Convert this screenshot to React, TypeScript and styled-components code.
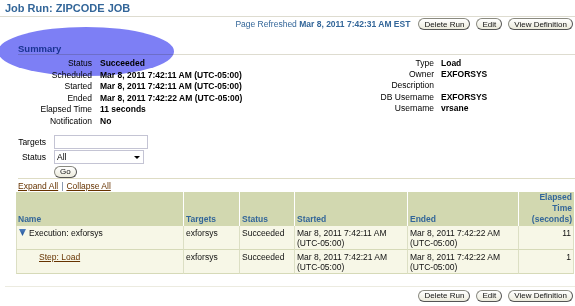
import React from "react";
import styled, { createGlobalStyle } from "styled-components";

const GlobalStyle = createGlobalStyle`
  html, body {
    margin: 0;
    padding: 0;
    background: #ffffff;
  }
  body {
    font-family: "Liberation Sans", Arial, sans-serif;
    font-size: 8.5px;
    color: #000000;
  }
`;

const Page = styled.div`
  position: relative;
  width: 575px;
  height: 306px;
  overflow: hidden;
`;

// the blue marker ellipse drawn over the summary heading
const Highlight = styled.div`
  position: absolute;
  left: -2px;
  top: 27px;
  width: 176px;
  height: 49px;
  border-radius: 50%;
  background: rgb(125, 127, 245);
  mix-blend-mode: multiply;
  pointer-events: none;
`;

const Title = styled.h1`
  margin: 0;
  padding: 2px 0 0 5px;
  height: 14px;
  font-size: 11px;
  line-height: 13px;
  font-weight: bold;
  color: #336699;
  border-bottom: 1px solid #dedcd0;
`;

const ActionBar = styled.div<{ $top?: number }>`
  display: flex;
  justify-content: flex-end;
  align-items: center;
  gap: 6px;
  height: 12px;
  padding: ${(p) => p.$top ?? 1}px 2px 0 0;
`;

const Refreshed = styled.span`
  color: #336699;
  margin-right: 2px;
  b {
    font-weight: bold;
  }
`;

const Button = styled.button`
  font-family: "Liberation Sans", Arial, sans-serif;
  font-size: 8px;
  line-height: 9px;
  height: 12px;
  padding: 0 5px;
  color: #111;
  background: linear-gradient(#ffffff, #ecebdc);
  border: 1px solid #8a8a80;
  border-right-color: #555;
  border-bottom-color: #555;
  border-radius: 6px;
  cursor: pointer;
`;

const SectionHeader = styled.h2`
  margin: 0 0 0 18px;
  padding-top: 13px;
  font-size: 9.5px;
  line-height: 11px;
  font-weight: bold;
  color: #336699;
  border-bottom: 1px solid #dedcd0;
`;

const Details = styled.div`
  display: flex;
  padding-top: 3px;
`;

const DetailGrid = styled.dl<{ $labelWidth: number; $gap: number; $lh: number; $width?: number }>`
  display: grid;
  grid-template-columns: ${(p) => p.$labelWidth}px auto;
  column-gap: ${(p) => p.$gap}px;
  align-content: start;
  margin: 0;
  line-height: ${(p) => p.$lh}px;
  width: ${(p) => (p.$width ? `${p.$width}px` : "auto")};
  flex: none;
  dt {
    text-align: right;
    white-space: nowrap;
  }
  dd {
    margin: 0;
    font-weight: bold;
    white-space: nowrap;
  }
`;

const FilterForm = styled.div`
  display: grid;
  grid-template-columns: 28px auto;
  column-gap: 8px;
  row-gap: 1px;
  align-items: center;
  margin: 7px 0 0 18px;
  label {
    text-align: right;
  }
`;

const TextInput = styled.input`
  box-sizing: border-box;
  width: 94px;
  height: 14px;
  margin: 0;
  border: 1px solid #c4c4d4;
  font-family: "Liberation Sans", Arial, sans-serif;
  font-size: 8.5px;
`;

const SelectWrap = styled.div`
  position: relative;
  width: 90px;
  height: 14px;
`;

const Select = styled.select`
  box-sizing: border-box;
  appearance: none;
  width: 90px;
  height: 14px;
  margin: 0;
  padding: 0 0 0 2px;
  border: 1px solid #c4c4d4;
  border-radius: 0;
  background: #fff;
  font-family: "Liberation Sans", Arial, sans-serif;
  font-size: 8.5px;
  color: #000;
`;

const SelectArrow = styled.span`
  position: absolute;
  right: 4px;
  top: 6px;
  width: 0;
  height: 0;
  border-left: 3px solid transparent;
  border-right: 3px solid transparent;
  border-top: 3px solid #000;
  pointer-events: none;
`;

const GoCell = styled.div`
  grid-column: 2;
  padding-top: 1px;
`;

const Divider = styled.div<{ $left: number; $top?: number; $color?: string }>`
  margin: ${(p) => p.$top ?? 0}px 0 0 ${(p) => p.$left}px;
  border-top: 1px solid ${(p) => p.$color ?? "#dedcc4"};
`;

const ExpandBar = styled.div`
  margin-left: 18px;
  height: 13px;
  line-height: 14px;
  color: #336699;
`;

const Link = styled.a`
  color: #663300;
  text-decoration: underline;
  cursor: pointer;
`;

const Sep = styled.span`
  margin: 0 3px;
  color: #5a6f90;
`;

const Table = styled.table`
  margin-left: 16px;
  width: 558px;
  border-collapse: separate;
  border-spacing: 0;
  table-layout: fixed;
`;

const Th = styled.th<{ $w: number; $right?: boolean }>`
  width: ${(p) => p.$w}px;
  height: 34px;
  box-sizing: border-box;
  padding: 0 2px 1px;
  background: #d2d8b0;
  border-left: 1px solid #ffffff;
  &:first-child {
    border-left: none;
  }
  vertical-align: bottom;
  text-align: ${(p) => (p.$right ? "right" : "left")};
  font-weight: bold;
  line-height: 11px;
  color: #336699;
`;

const Td = styled.td<{ $right?: boolean }>`
  height: 24px;
  box-sizing: border-box;
  padding: 2px 2px 0;
  vertical-align: top;
  background: #f7f7e7;
  border-left: 1px solid #dcdfc4;
  border-bottom: 1px solid #d6dab8;
  &:last-child {
    border-right: 1px solid #dcdfc4;
  }
  text-align: ${(p) => (p.$right ? "right" : "left")};
  line-height: 10.5px;
  color: #111;
`;

const NameCell = styled.span<{ $indent?: number }>`
  display: inline-flex;
  align-items: center;
  gap: 3px;
  padding-left: ${(p) => p.$indent ?? 0}px;
`;

const TwistyIcon = () => (
  <svg width="7" height="7" viewBox="0 0 7 7">
    <defs>
      <linearGradient id="tw" x1="0" y1="0" x2="0" y2="1">
        <stop offset="0" stopColor="#4f7fc0" />
        <stop offset="1" stopColor="#1d4f92" />
      </linearGradient>
    </defs>
    <polygon points="0,0 7,0 3.5,7" fill="url(#tw)" />
  </svg>
);

const summaryLeft = [
  ["Status", "Succeeded"],
  ["Scheduled", "Mar 8, 2011 7:42:11 AM (UTC-05:00)"],
  ["Started", "Mar 8, 2011 7:42:11 AM (UTC-05:00)"],
  ["Ended", "Mar 8, 2011 7:42:22 AM (UTC-05:00)"],
  ["Elapsed Time", "11 seconds"],
  ["Notification", "No"],
];

const summaryRight = [
  ["Type", "Load"],
  ["Owner", "EXFORSYS"],
  ["Description", ""],
  ["DB Username", "EXFORSYS"],
  ["Username", "vrsane"],
];

const steps = [
  {
    name: "Execution: exforsys",
    top: true,
    targets: "exforsys",
    status: "Succeeded",
    started: "Mar 8, 2011 7:42:11 AM",
    ended: "Mar 8, 2011 7:42:22 AM",
    elapsed: "11",
  },
  {
    name: "Step: Load",
    top: false,
    targets: "exforsys",
    status: "Succeeded",
    started: "Mar 8, 2011 7:42:21 AM",
    ended: "Mar 8, 2011 7:42:22 AM",
    elapsed: "1",
  },
];

// same three buttons at top and bottom of the page
const Actions = () => (
  <>
    <Button>Delete Run</Button>
    <Button>Edit</Button>
    <Button>View Definition</Button>
  </>
);

const App = () => {
  return (
    <Page>
      <GlobalStyle />
      <Title>Job Run: ZIPCODE JOB</Title>
      <ActionBar>
        <Refreshed>
          Page Refreshed <b>Mar 8, 2011 7:42:31 AM EST</b>
        </Refreshed>
        <Actions />
      </ActionBar>

      <SectionHeader>Summary</SectionHeader>
      <Details>
        <DetailGrid $labelWidth={92} $gap={8} $lh={11.6} $width={342}>
          {summaryLeft.map(([k, v]) => (
            <React.Fragment key={k}>
              <dt>{k}</dt>
              <dd>{v}</dd>
            </React.Fragment>
          ))}
        </DetailGrid>
        <DetailGrid $labelWidth={92} $gap={7} $lh={11.2}>
          {summaryRight.map(([k, v]) => (
            <React.Fragment key={k}>
              <dt>{k}</dt>
              <dd>{v}</dd>
            </React.Fragment>
          ))}
        </DetailGrid>
      </Details>

      <FilterForm>
        <label>Targets</label>
        <TextInput type="text" />
        <label>Status</label>
        <SelectWrap>
          <Select defaultValue="All">
            <option>All</option>
            <option>Succeeded</option>
            <option>Failed</option>
          </Select>
          <SelectArrow />
        </SelectWrap>
        <GoCell>
          <Button>Go</Button>
        </GoCell>
      </FilterForm>

      <Divider $left={18} />
      <ExpandBar>
        <Link>Expand All</Link>
        <Sep>|</Sep>
        <Link>Collapse All</Link>
      </ExpandBar>

      <Table>
        <thead>
          <tr>
            <Th $w={167}>Name</Th>
            <Th $w={56}>Targets</Th>
            <Th $w={55}>Status</Th>
            <Th $w={113}>Started</Th>
            <Th $w={111}>Ended</Th>
            <Th $w={56} $right>
              Elapsed
              <br />
              Time
              <br />
              (seconds)
            </Th>
          </tr>
        </thead>
        <tbody>
          {steps.map((s) => (
            <tr key={s.name}>
              <Td>
                {s.top ? (
                  <NameCell>
                    <TwistyIcon />
                    {s.name}
                  </NameCell>
                ) : (
                  <NameCell $indent={20}>
                    <Link>{s.name}</Link>
                  </NameCell>
                )}
              </Td>
              <Td>{s.targets}</Td>
              <Td>{s.status}</Td>
              <Td>
                {s.started}
                <br />
                (UTC-05:00)
              </Td>
              <Td>
                {s.ended}
                <br />
                (UTC-05:00)
              </Td>
              <Td $right>{s.elapsed}</Td>
            </tr>
          ))}
        </tbody>
      </Table>

      <Divider $left={5} $top={12} $color="#ecebe0" />
      <ActionBar $top={3}>
        <Actions />
      </ActionBar>
      <Highlight />
    </Page>
  );
};

export default App;
